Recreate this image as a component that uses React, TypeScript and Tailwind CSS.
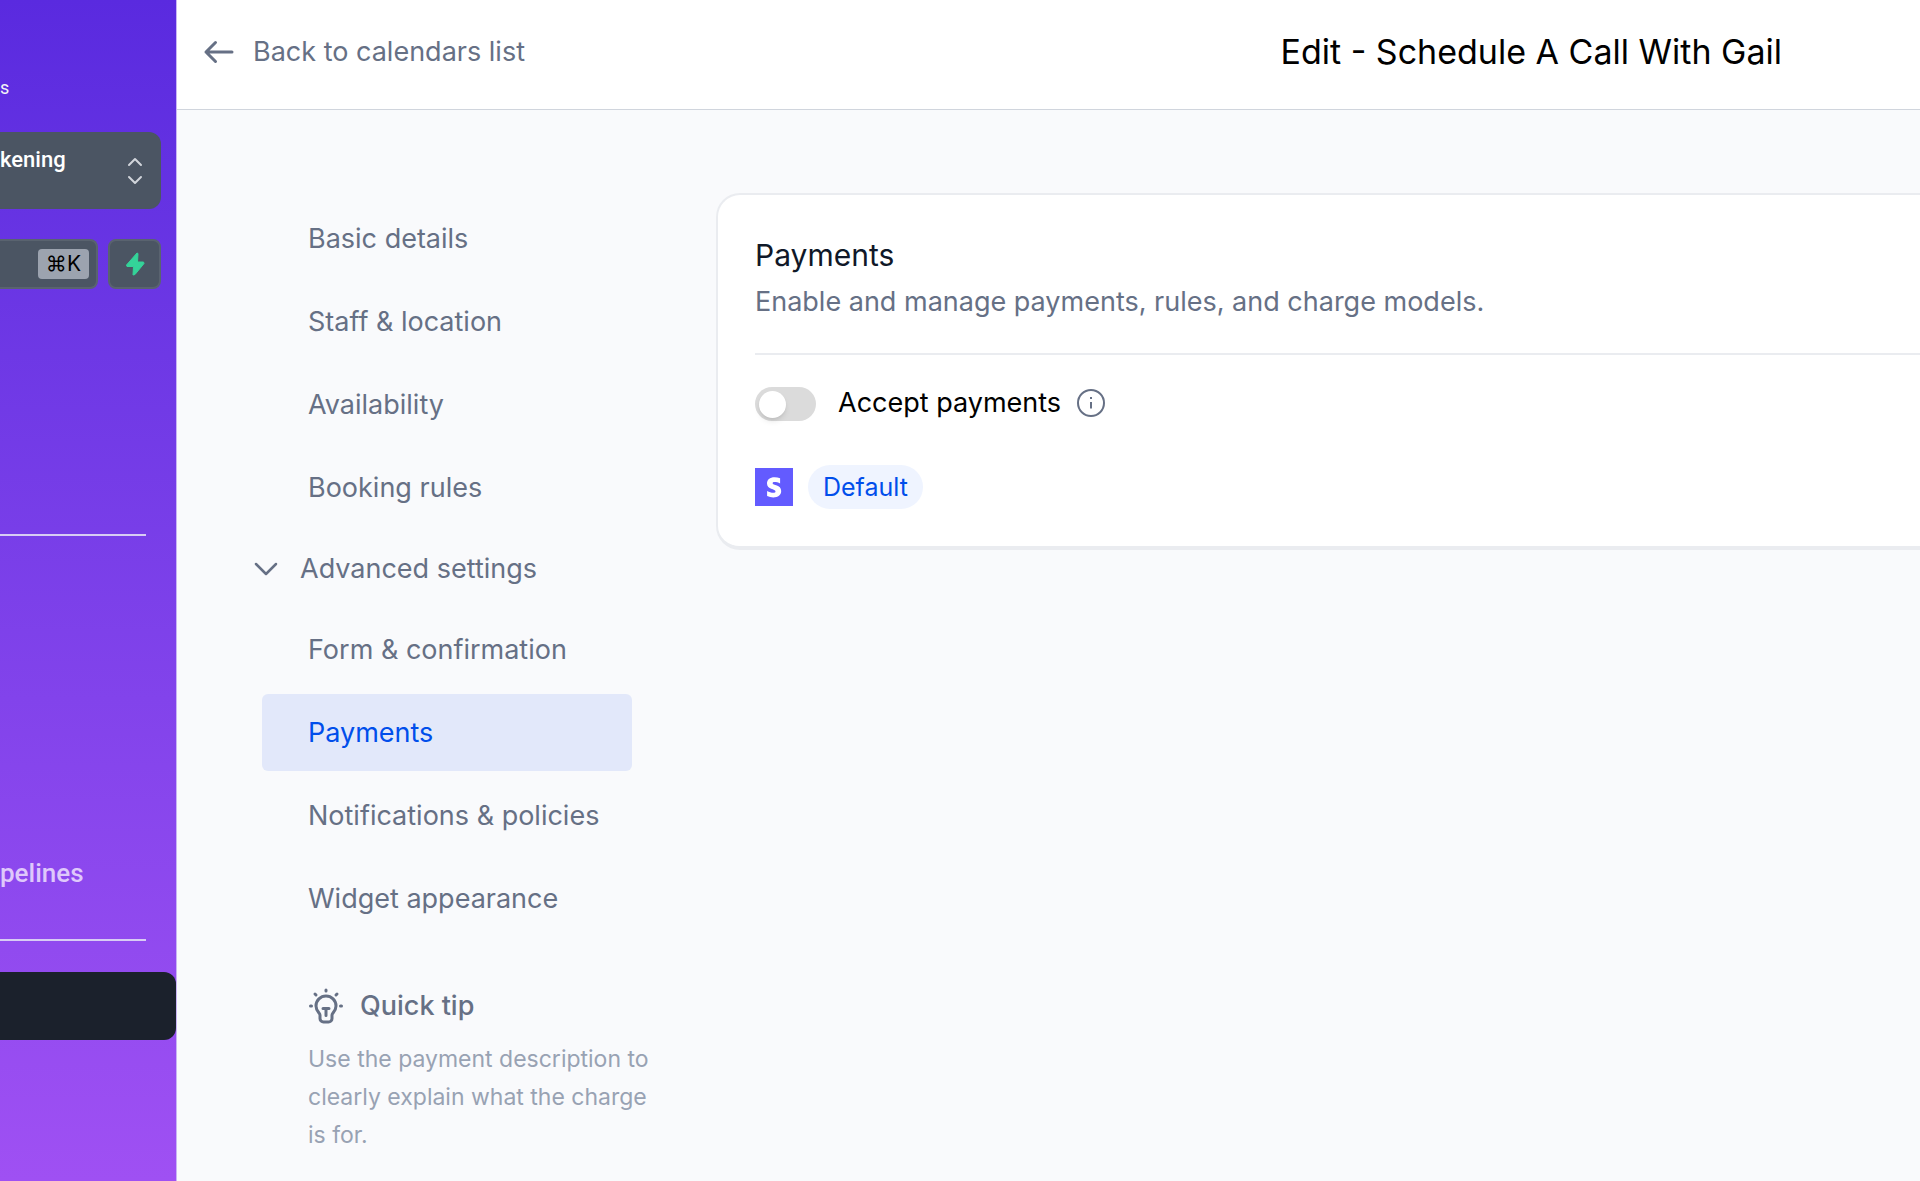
import React, { useState } from 'react';

const basicItems = ['Basic details', 'Staff & location', 'Availability', 'Booking rules'];

const advancedItems = ['Form & confirmation', 'Payments', 'Notifications & policies', 'Widget appearance'];

function AppSidebar() {
  return (
    <aside className="flex w-[177px] shrink-0 flex-col overflow-hidden border-r border-[#c9b5f5] bg-linear-to-b from-[#5a2adf] to-[#9f50f3] font-['Roboto',sans-serif]">
      <p className="mt-[76px] text-lg leading-6 text-gray-100">s</p>

      <button className="mt-8 mr-[15px] flex h-[77px] items-center justify-between rounded-r-xl bg-[#4b5563] pr-[18px] text-left">
        <span className="self-start pt-4 text-[22px] leading-6 font-medium text-white">kening</span>
        <svg viewBox="0 0 16 28" className="h-7 w-4" fill="none" stroke="#d1d5db" strokeWidth="2" strokeLinecap="round" strokeLinejoin="round">
          <path d="m2 8 6-6 6 6M2 20l6 6 6-6" />
        </svg>
      </button>

      <div className="mt-[30px] mr-[15px] flex gap-[10px]">
        <button aria-label="Search" className="flex h-[50px] flex-1 items-center justify-end rounded-r-lg border-2 border-l-0 border-[#59636f] bg-[#4b5563] pr-[7px]">
          <kbd className="flex h-[30px] items-center rounded-sm bg-[#9ca3af] px-2 font-['Inter',sans-serif] text-[21px] text-black">⌘K</kbd>
        </button>
        <button aria-label="Quick actions" className="flex h-[50px] w-[53px] items-center justify-center rounded-lg border-2 border-[#59636f] bg-[#4b5563]">
          <svg viewBox="0 0 20 24" className="h-6 w-5" fill="#34d399" stroke="#34d399" strokeLinejoin="round">
            <path d="M12 1 1.500 13l.5 1.500h6.500L8 23l2-.5 9-11-.5-1.500H12.500L13 1.500z" />
          </svg>
        </button>
      </div>

      <hr className="mt-[245px] mr-[30px] border-t-2 border-[#d8ccf4]" />
      <a href="#pipelines" className="mt-[323px] text-[26px] leading-7 font-medium text-[#dfc8fb]">pelines</a>
      <hr className="mt-[52px] mr-[30px] border-t-2 border-[#d8ccf4]" />
      <a href="#settings" aria-label="Settings" className="mt-[31px] h-[68px] rounded-r-xl bg-[#1b212c]" />
    </aside>
  );
}

function NavLinkItem({ label, active, onSelect }: { label: string; active: boolean; onSelect: () => void }) {
  return (
    <a
      href="#"
      onClick={(e) => {
        e.preventDefault();
        onSelect();
      }}
      className={
        active
          ? 'flex h-[77px] items-center rounded-md bg-[#e2e8fa] pl-[46px] text-[#004eeb]'
          : 'flex h-[77px] items-center rounded-md pl-[46px] text-[#667085]'
      }
    >
      {label}
    </a>
  );
}

function TipIcon() {
  return (
    <svg viewBox="0 0 36 36" className="size-9 shrink-0" fill="none" stroke="#667085" strokeWidth="3" strokeLinecap="round" strokeLinejoin="round">
      <path d="M18 2v1M7 6l1 1M29 6l-1 1M2.500 18h1M32.500 18h1" />
      <path d="M12 27c0-2-4-4-4-9a10 10 0 0 1 20 0c0 5-4 7-4 9v3.500a3.500 3.500 0 0 1-3.500 3.500h-5A3.500 3.500 0 0 1 12 30.500z" />
      <path d="M15 20.500h6M18 20.500v7" />
    </svg>
  );
}

function SettingsNav() {
  const [current, setCurrent] = useState('Payments');
  const [open, setOpen] = useState(true);

  return (
    <nav className="w-[370px] shrink-0 pt-[7px] text-[27px] leading-9">
      <div className="flex flex-col gap-[6px]">
        {basicItems.map((label) => (
          <NavLinkItem key={label} label={label} active={current === label} onSelect={() => setCurrent(label)} />
        ))}
      </div>
      <button onClick={() => setOpen(!open)} className="-ml-2 flex h-[85px] items-center gap-[22px] text-[#667085]">
        <svg viewBox="0 0 24 16" className="h-4 w-6" fill="none" stroke="currentColor" strokeWidth="2.500" strokeLinecap="round" strokeLinejoin="round">
          <path d="m2 3 10 10L22 3" />
        </svg>
        Advanced settings
      </button>
      {open && (
        <div className="flex flex-col gap-[6px]">
          {advancedItems.map((label) => (
            <NavLinkItem key={label} label={label} active={current === label} onSelect={() => setCurrent(label)} />
          ))}
        </div>
      )}

      {/* Quick tip */}
      <section className="-mr-6 pt-[51px] pl-[46px]">
        <h3 className="flex items-center gap-4 font-medium text-[#667085]">
          <TipIcon />
          Quick tip
        </h3>
        <p className="mt-4 text-[23px] leading-[38px] text-[#98a2b3]">
          Use the payment description to clearly explain what the charge is for.
        </p>
      </section>
    </nav>
  );
}

function PaymentsCard() {
  return (
    <section className="rounded-l-3xl border-2 border-r-0 border-b-4 border-[#eaecf0] bg-white pb-[37px] pl-[37px]">
      <h2 className="pt-10 text-[30px] leading-10 text-[#101828]">Payments</h2>
      <p className="mt-[9px] text-[27px] leading-9 text-[#667085]">Enable and manage payments, rules, and charge models.</p>
      <hr className="mt-[33px] border-t-2 border-[#eaecf0]" />

      <div className="mt-8 flex items-start">
        <input
          id="accept-payments"
          type="checkbox"
          role="switch"
          className="h-[34px] w-[61px] appearance-none rounded-full bg-[#dbdbdb] p-1 before:block before:size-[27px] before:rounded-full before:bg-white before:shadow-md checked:bg-[#155eef] checked:before:ml-auto"
        />
        <label htmlFor="accept-payments" className="pl-[22px] text-[27px] leading-8 text-black">
          Accept payments
        </label>
        <svg viewBox="0 0 32 32" className="ml-[14px] size-8" fill="none" stroke="#667085" strokeWidth="2">
          <circle cx="16" cy="16" r="13" />
          <path d="M16 15v6.500M16 10v2" />
        </svg>
      </div>

      <div className="mt-[44px] flex items-center gap-[15px]">
        <svg viewBox="0 0 38 38" className="size-[38px]">
          <path fill="#635bff" d="M0 0h38v38H0z" />
          <path
            fill="#fff"
            d="M17.600 15.200c0-.9.700-1.200 1.900-1.200 1.700 0 3.900.5 5.600 1.400V10.200a15 15 0 0 0-5.600-1C14.900 9.200 12 11.600 12 15.500c0 6.200 8.500 5.200 8.500 7.900 0 1-.9 1.300-2.200 1.300-1.900 0-4.300-.8-6.200-1.800v5.200a15.700 15.700 0 0 0 6.200 1.300c4.700 0 7.900-2.300 7.900-6.400 0-6.600-8.600-5.500-8.600-7.800z"
          />
        </svg>
        <span className="rounded-full bg-[#eff4ff] px-[15px] py-1 text-[25px] leading-9 text-[#004eeb]">Default</span>
      </div>
    </section>
  );
}

export default function App() {
  return (
    <div className="flex min-h-screen overflow-hidden bg-[#f9fafc] font-['Inter',sans-serif]">
      <AppSidebar />
      <div className="flex min-w-0 flex-1 flex-col">
        <header className="flex h-[110px] items-center justify-between border-b border-[#d0d5dd] bg-white pr-[138px] pb-[6px] pl-6">
          <a href="#calendars" className="flex items-center gap-4 text-[27px] leading-9 text-[#667085]">
            <svg viewBox="0 0 36 36" className="size-9" fill="none" stroke="currentColor" strokeWidth="3" strokeLinecap="round" strokeLinejoin="round">
              <path d="M31 18H5M14.500 8.500 5 18l9.500 9.500" />
            </svg>
            Back to calendars list
          </a>
          <h1 className="text-[34px] leading-10 text-black">Edit - Schedule A Call With Gail</h1>
        </header>
        <div className="flex flex-1 gap-[84px] pt-[83px] pl-[85px]">
          <SettingsNav />
          <main className="min-w-0 flex-1">
            <PaymentsCard />
          </main>
        </div>
      </div>
    </div>
  );
}
